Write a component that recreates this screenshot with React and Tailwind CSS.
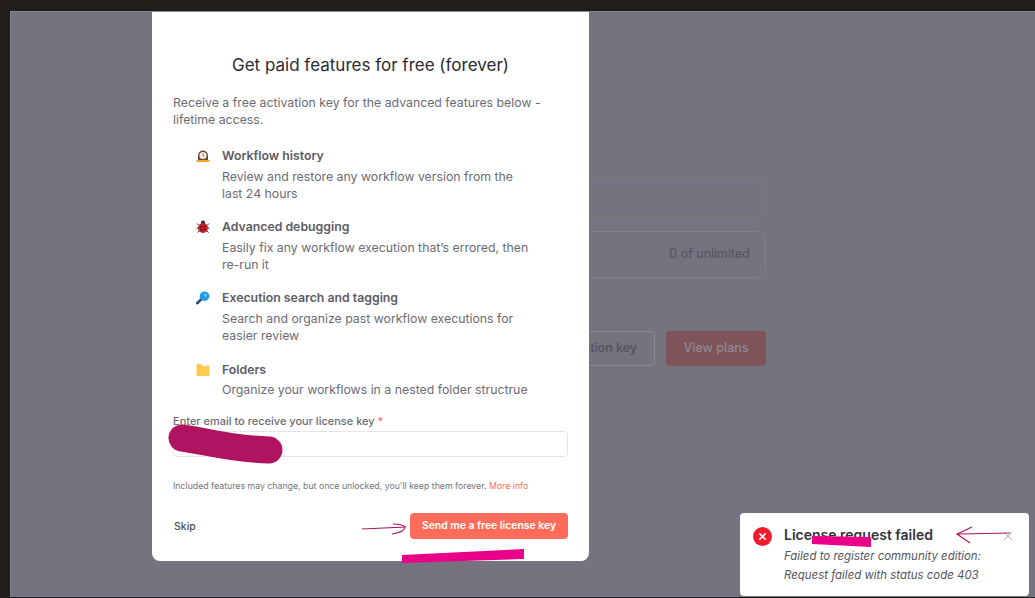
import React from 'react';
import { X } from 'lucide-react';

const features = [
  { title: 'Workflow history', text: 'Review and restore any workflow version from the last 24 hours' },
  { title: 'Advanced debugging', text: 'Easily fix any workflow execution that’s errored, then re-run it' },
  { title: 'Execution search and tagging', text: 'Search and organize past workflow executions for easier review' },
  { title: 'Folders', text: 'Organize your workflows in a nested folder structrue' },
];

const ClockIcon = () => (
  <svg viewBox="0 0 14 14" className="w-[14px] h-[14px]">
    <path d="M2 11V6.5a5 5 0 0 1 10 0V11z" fill="#6b4a3a" />
    <circle cx="7" cy="6.5" r="3.6" fill="#f3ede6" />
    <path d="M7 4.5v2.2l1.4.8" stroke="#6b4a3a" strokeWidth="0.7" fill="none" />
    <rect x="0.5" y="11" width="13" height="2" rx="0.5" fill="#f0a52b" />
  </svg>
);

const BugIcon = () => (
  <svg viewBox="0 0 14 14" className="w-[14px] h-[14px]">
    <path d="M1 3.5l2 2M13 3.5l-2 2M0.5 8H3M13.5 8H11M1.5 12.5L3.5 10.5M12.5 12.5L10.5 10.5" stroke="#2d2a30" strokeWidth="1" />
    <circle cx="7" cy="2.5" r="2" fill="#2d2a30" />
    <circle cx="7" cy="8" r="5" fill="#d8202c" />
    <path d="M7 3.5V13" stroke="#3a1a20" strokeWidth="0.6" />
    <circle cx="4.8" cy="6.5" r="1" fill="#3a1a20" />
    <circle cx="9.2" cy="6.5" r="1" fill="#3a1a20" />
    <circle cx="4.8" cy="9.8" r="1" fill="#3a1a20" />
    <circle cx="9.2" cy="9.8" r="1" fill="#3a1a20" />
  </svg>
);

const SearchIcon = () => (
  <svg viewBox="0 0 14 14" className="w-[14px] h-[14px]">
    <path d="M5 8.5L1.2 12.2" stroke="#2c4a6e" strokeWidth="2.6" strokeLinecap="round" />
    <circle cx="8.5" cy="5.2" r="4.8" fill="#1d9be6" />
    <circle cx="9.5" cy="4" r="1.8" fill="#5cc0f2" />
  </svg>
);

const FolderIcon = () => (
  <svg viewBox="0 0 14 14" className="w-[14px] h-[14px]">
    <path d="M0.5 2a1 1 0 0 1 1-1h3.5l1.5 1.8h6a1 1 0 0 1 1 1V12a1 1 0 0 1-1 1h-11a1 1 0 0 1-1-1z" fill="#fdcb4f" />
    <path d="M2 3h.01M4 3h.01M3 5h.01M5 5h.01M7 5h.01" stroke="#f0a52b" strokeWidth="0.8" strokeLinecap="round" />
  </svg>
);

const icons = [ClockIcon, BugIcon, SearchIcon, FolderIcon];

const App = () => {
  return (
    <div className="w-[1035px] h-[598px] overflow-hidden bg-[#201d1a] pt-[11px] pb-px pl-[10px] font-['Inter',sans-serif]">
      <div className="relative w-full h-full bg-[#75737f] border-l border-t border-[#84828e]">
        {/* Page behind the overlay */}
        <div className="pl-[150px] pt-[164px] w-[755px]">
          <div className="h-[41px] border border-[#7d7874] rounded-sm" />
          <div className="mt-[14px] h-[47px] border border-[#7f7d89] rounded-lg flex items-center justify-end pr-[15px] text-[12.5px] text-[#54525d]">
            0 of unlimited
          </div>
          <div className="mt-[53px] flex justify-end gap-[11px]">
            <div className="h-[35px] w-[120px] border border-[#8a8894] rounded flex items-center justify-end pr-[17px] text-[12.5px] font-medium text-[#53515c]">
              ation key
            </div>
            <div className="h-[35px] w-[100px] bg-[#7e535a] rounded flex items-center justify-center text-[12.5px] font-medium text-[#8f8a96]">
              View plans
            </div>
          </div>
        </div>

        {/* Modal */}
        <div className="absolute left-[141px] top-0 w-[437px] h-[549px] bg-white rounded-b-lg px-[21px] text-[#6c6b76]">
          <h2 className="pt-[40.5px] text-center text-[17px] leading-[24px] text-[#2c2b33]">Get paid features for free (forever)</h2>
          <p className="mt-[17px] text-[12.3px] leading-[17px]">
            Receive a free activation key for the advanced features below - lifetime access.
          </p>
          <ul className="mt-[19.5px] pl-[23px] flex flex-col gap-[16.7px]">
            {features.map((f, i) => {
              const Icon = icons[i];
              return (
                <li key={f.title} className="flex gap-[12px]">
                  <div className="mt-[2px] shrink-0"><Icon /></div>
                  <div className="w-[310px]">
                    <div className="text-[12.3px] font-semibold leading-[17px] text-[#5d5c66]">{f.title}</div>
                    <div className="mt-[3.5px] text-[12.3px] leading-[17px]">{f.text}</div>
                  </div>
                </li>
              );
            })}
          </ul>
          <label className="block mt-[15.9px] text-[11px] leading-[14px] font-medium text-[#6c6b76]">
            Enter email to receive your license key <span className="text-[#ff6d5a]">*</span>
          </label>
          <div className="mt-[3px] h-[26px] w-[395px] bg-white border border-[#e3e5ec] rounded" />
          <p className="mt-[23px] text-[8.75px] leading-[12px] text-[#74737d]">
            Included features may change, but once unlocked, you'll keep them forever. <span className="text-[#ff6d5a]">More info</span>
          </p>
          <div className="mt-[21px] w-[395px] flex items-center justify-between">
            <span className="ml-px mt-px text-[10.5px] font-medium text-[#4f4e58]">Skip</span>
            <button className="h-[26px] w-[158px] rounded bg-[#ff6d5a] text-white text-[10.4px] font-semibold">Send me a free license key</button>
          </div>
        </div>

        {/* Toast */}
        <div className="absolute left-[729px] top-[501px] w-[289px] h-[83px] bg-white rounded flex pl-[13px] pt-[13px] gap-[12px]">
          <div className="shrink-0 mt-[1px] w-[19px] h-[19px] rounded-full bg-[#ee1c2e] flex items-center justify-center">
            <X className="w-[11px] h-[11px] text-white" strokeWidth={3.5} />
          </div>
          <div>
            <div className="text-[14px] leading-[18px] font-semibold text-[#33323a]">License request failed</div>
            <div className="mt-[3px] text-[11.45px] leading-[18.5px] italic text-[#55545e]">
              Failed to register community edition:<br />Request failed with status code 403
            </div>
          </div>
          <X className="absolute right-[14px] top-[16px] w-[14px] h-[14px] text-[#9b9aa2]" strokeWidth={1.5} />
        </div>

        {/* Annotations drawn on top of the screenshot */}
        <svg className="absolute left-[-11px] top-[-12px] w-[1035px] h-[598px] pointer-events-none" viewBox="0 0 1035 598" fill="none">
          <path d="M182 438C205 441 230 449 269 450" stroke="#b0135f" strokeWidth="27" strokeLinecap="round" />
          <path d="M362 529L405 527C403 525 398 524 393 524M405 527C405 531 398 533 392 534" stroke="#b0135f" strokeWidth="1.2" />
          <path d="M402 555L524 549V559L402 563z" fill="#ea0088" />
          <path d="M812 536L871 537V547L812 544z" fill="#ea0088" />
          <path d="M1010 533L958 534M972 527L957 534L970 543" stroke="#b0135f" strokeWidth="1.2" />
        </svg>
      </div>
    </div>
  );
};

export default App;
